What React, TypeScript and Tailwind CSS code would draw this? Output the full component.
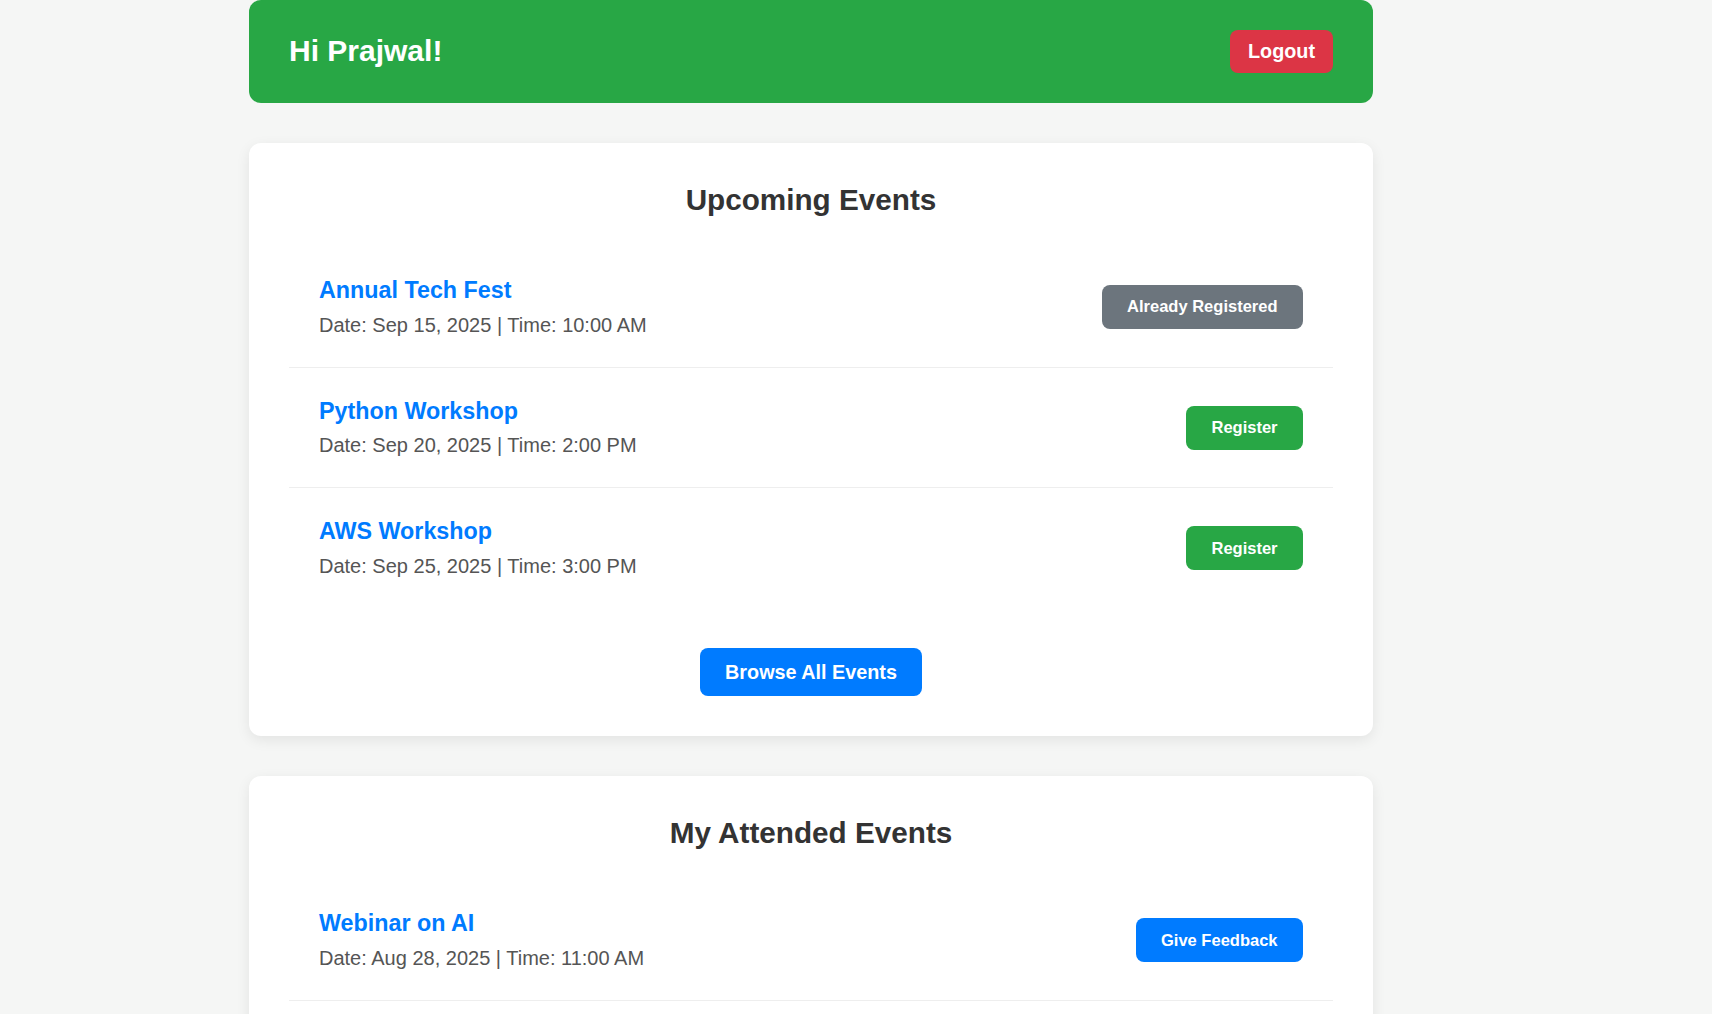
import React from 'react';

type EventItem = {
  id: number;
  title: string;
  date: string;
  time: string;
  registered?: boolean;
};

const upcoming: EventItem[] = [
  { id: 1, title: 'Annual Tech Fest', date: 'Sep 15, 2025', time: '10:00 AM', registered: true },
  { id: 2, title: 'Python Workshop', date: 'Sep 20, 2025', time: '2:00 PM' },
  { id: 3, title: 'AWS Workshop', date: 'Sep 25, 2025', time: '3:00 PM' },
];

const attended: EventItem[] = [
  { id: 10, title: 'Webinar on AI', date: 'Aug 28, 2025', time: '11:00 AM' },
];

function EventRow({
  event,
  action,
  bordered,
}: {
  event: EventItem;
  action: React.ReactNode;
  bordered: boolean;
}) {
  return (
    <li
      className={`flex items-center justify-between px-[30px] py-[30px] ${
        bordered ? 'border-b border-[#eeeeee]' : ''
      }`}
    >
      <div>
        <h3 className="text-[23.3px] leading-[1.15] font-bold text-[#007bff] mb-[10px]">{event.title}</h3>
        <p className="text-[20px] leading-[1.15] text-[#555555]">
          Date: {event.date} | Time: {event.time}
        </p>
      </div>
      {action}
    </li>
  );
}

const btn = 'rounded-[8px] px-[25.5px] py-[12.5px] text-[16.5px] leading-[1.15] font-bold text-white';

export default function App() {
  return (
    <div className="min-h-screen bg-[#f5f6f5] font-['Liberation_Sans',Arial,sans-serif]">
      <div className="ml-[249px] w-[1124px] pb-10">
        <header className="flex items-center justify-between bg-[#28a745] rounded-[12px] px-[40px] py-[30px]">
          <h1 className="text-[30px] leading-[1.15] font-bold text-white">Hi Prajwal!</h1>
          <button className="bg-[#dc3545] text-white font-bold text-[19.8px] leading-[1.15] px-[18px] py-[10px] rounded-[8px]">
            Logout
          </button>
        </header>

        <section className="mt-[40px] bg-white rounded-[12px] p-[40px] shadow-[0_4px_14px_rgba(0,0,0,0.08)]">
          <h2 className="text-center text-[29.7px] leading-[1.15] font-bold text-[#333333] mb-[30px]">
            Upcoming Events
          </h2>
          <ul>
            {upcoming.map((ev, i) => (
              <EventRow
                key={ev.id}
                event={ev}
                bordered={i < upcoming.length - 1}
                action={
                  ev.registered ? (
                    <button className={`${btn} bg-[#6c757d]`}>Already Registered</button>
                  ) : (
                    <button className={`${btn} bg-[#28a745]`}>Register</button>
                  )
                }
              />
            ))}
          </ul>
          <div className="flex justify-center mt-[40px]">
            <button className="bg-[#007bff] text-white font-bold text-[19.8px] leading-[1.15] px-[25px] py-[12.5px] rounded-[8px]">
              Browse All Events
            </button>
          </div>
        </section>

        <section className="mt-[40px] bg-white rounded-[12px] p-[40px] shadow-[0_4px_14px_rgba(0,0,0,0.08)]">
          <h2 className="text-center text-[29.7px] leading-[1.15] font-bold text-[#333333] mb-[30px]">
            My Attended Events
          </h2>
          <ul>
            {attended.map(ev => (
              <EventRow
                key={ev.id}
                event={ev}
                bordered
                action={<button className={`${btn} bg-[#007bff]`}>Give Feedback</button>}
              />
            ))}
          </ul>
        </section>
      </div>
    </div>
  );
}
